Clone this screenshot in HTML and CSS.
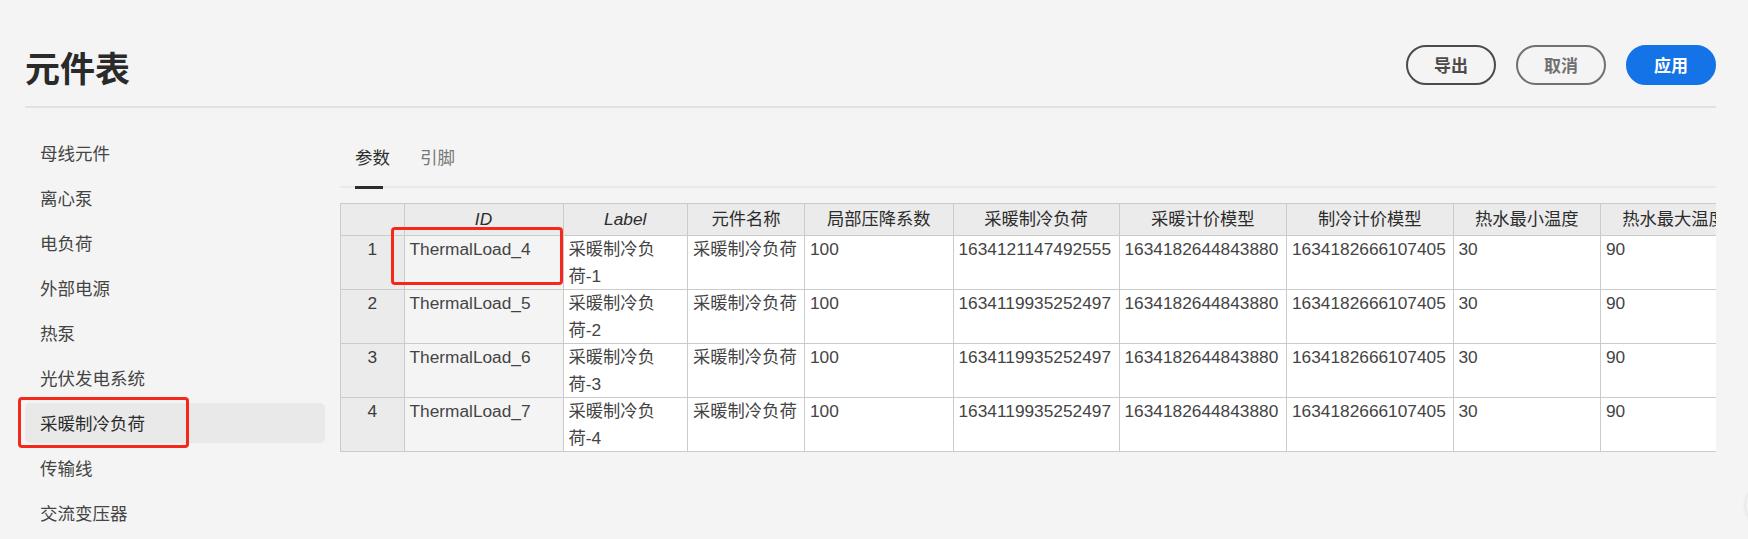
FILE: index.html
```html
<!DOCTYPE html>
<html lang="zh-CN">
<head>
<meta charset="utf-8">
<title>元件表</title>
<link rel="stylesheet" href="styles.css">
</head>
<body>
<div class="page">
  <header class="header">
    <h1 class="title">元件表</h1>
    <div class="actions">
      <button class="btn btn-export">导出</button>
      <button class="btn btn-cancel">取消</button>
      <button class="btn btn-apply">应用</button>
    </div>
  </header>
  <div class="content">
    <nav class="sidebar">
      <div class="nav-item">母线元件</div>
      <div class="nav-item">离心泵</div>
      <div class="nav-item">电负荷</div>
      <div class="nav-item">外部电源</div>
      <div class="nav-item">热泵</div>
      <div class="nav-item">光伏发电系统</div>
      <div class="nav-item active">采暖制冷负荷<span class="mark mark-nav"></span></div>
      <div class="nav-item">传输线</div>
      <div class="nav-item">交流变压器</div>
    </nav>
    <main class="main">
      <div class="tabs">
        <div class="tab active">参数</div>
        <div class="tab">引脚</div>
      </div>
      <div class="table-wrap">
        <table class="grid">
          <colgroup>
            <col class="c-num">
            <col class="c-id">
            <col class="c-label">
            <col class="c-name">
            <col class="c-drop">
            <col class="c-load">
            <col class="c-heat">
            <col class="c-cool">
            <col class="c-min">
            <col class="c-max">
          </colgroup>
          <thead>
            <tr>
              <th></th>
              <th class="it">ID</th>
              <th class="it">Label</th>
              <th>元件名称</th>
              <th>局部压降系数</th>
              <th>采暖制冷负荷</th>
              <th>采暖计价模型</th>
              <th>制冷计价模型</th>
              <th>热水最小温度</th>
              <th>热水最大温度</th>
            </tr>
          </thead>
          <tbody>
            <tr>
              <td class="num">1</td><td class="id">ThermalLoad_4</td><td>采暖制冷负荷-1</td><td>采暖制冷负荷</td><td>100</td><td>1634121147492555</td><td>1634182644843880</td><td>1634182666107405</td><td>30</td><td>90</td>
            </tr>
            <tr>
              <td class="num">2</td><td class="id">ThermalLoad_5</td><td>采暖制冷负荷-2</td><td>采暖制冷负荷</td><td>100</td><td>1634119935252497</td><td>1634182644843880</td><td>1634182666107405</td><td>30</td><td>90</td>
            </tr>
            <tr>
              <td class="num">3</td><td class="id">ThermalLoad_6</td><td>采暖制冷负荷-3</td><td>采暖制冷负荷</td><td>100</td><td>1634119935252497</td><td>1634182644843880</td><td>1634182666107405</td><td>30</td><td>90</td>
            </tr>
            <tr>
              <td class="num">4</td><td class="id">ThermalLoad_7</td><td>采暖制冷负荷-4</td><td>采暖制冷负荷</td><td>100</td><td>1634119935252497</td><td>1634182644843880</td><td>1634182666107405</td><td>30</td><td>90</td>
            </tr>
          </tbody>
        </table>
        <span class="mark mark-cell"></span>
      </div>
    </main>
  </div>
</div>
<div class="float-btn"></div>
</body>
</html>
```

FILE: styles.css
```css
html, body {
  margin: 0;
  padding: 0;
  overflow: hidden;
}
body {
  background: #f4f4f4;
  font-family: "Liberation Sans", "Noto Sans CJK SC", sans-serif;
  color: #444444;
}
.page {
  padding: 45px 32px 0 25px;
}
.header {
  display: flex;
  justify-content: space-between;
  align-items: flex-start;
  height: 61px;
  border-bottom: 2px solid #e1e1e1;
}
.title {
  margin: 2px 0 0 0;
  font-size: 35px;
  line-height: 40px;
  font-weight: 700;
  color: #2a2a2a;
  font-family: "Noto Sans CJK SC", sans-serif;
}
.actions {
  display: flex;
  gap: 20px;
}
.btn {
  width: 90px;
  height: 40px;
  box-sizing: border-box;
  border-radius: 20px;
  border: 2px solid #4b4b4b;
  background: transparent;
  font-family: "Noto Sans CJK SC", sans-serif;
  font-size: 17px;
  font-weight: 700;
  line-height: 36px;
  padding: 0;
  color: #4b4b4b;
}
.btn-cancel {
  border-color: #707070;
  color: #707070;
}
.btn-apply {
  border-color: #1473e6;
  background: #1473e6;
  color: #ffffff;
}
.content {
  display: flex;
  gap: 15px;
  padding-top: 25px;
}
.sidebar {
  width: 300px;
  flex: none;
  display: flex;
  flex-direction: column;
  gap: 5px;
}
.nav-item {
  position: relative;
  height: 40px;
  line-height: 40px;
  padding-left: 15px;
  font-size: 17.5px;
  color: #444444;
  border-radius: 5px;
  font-family: "Noto Sans CJK SC", sans-serif;
}
.nav-item.active {
  background: #e9e9e9;
  color: #2c2c2c;
}
.mark {
  position: absolute;
  box-sizing: border-box;
  border: 3px solid #f5281c;
  border-radius: 4px;
  pointer-events: none;
}
.mark-nav {
  left: -7px;
  top: -6px;
  width: 171px;
  height: 51px;
}
.main {
  flex: 1;
  min-width: 0;
}
.tabs {
  display: flex;
  gap: 30px;
  height: 53px;
  padding-left: 15px;
  border-bottom: 2px solid #e9e9e9;
}
.tab {
  position: relative;
  padding-top: 11px;
  line-height: 25px;
  font-size: 17.5px;
  color: #777777;
  font-family: "Noto Sans CJK SC", sans-serif;
}
.tab.active {
  color: #2c2c2c;
}
.tab.active::after {
  content: "";
  position: absolute;
  left: 0;
  bottom: -3px;
  width: 28px;
  height: 3px;
  background: #2c2c2c;
}
.table-wrap {
  position: relative;
  margin-top: 15px;
  overflow: hidden;
}
.grid {
  border-collapse: collapse;
  table-layout: fixed;
  width: 1407px;
  font-size: 17.3px;
}
.c-num { width: 63.5px; }
.c-id { width: 159px; }
.c-label { width: 124.5px; }
.c-name { width: 117px; }
.c-drop { width: 148.5px; }
.c-load { width: 166px; }
.c-heat { width: 167.5px; }
.c-cool { width: 166.5px; }
.c-min { width: 147.5px; }
.c-max { width: 147px; }
.grid th, .grid td {
  border: 1px solid #cbcbcb;
  padding: 0 5px;
  overflow: hidden;
  white-space: normal;
}
.grid th {
  background: #ebebeb;
  height: 31px;
  line-height: 31px;
  font-weight: 400;
  color: #2c2c2c;
  text-align: center;
  white-space: nowrap;
}
.grid th.it {
  font-style: italic;
}
.grid td {
  background: #ffffff;
  line-height: 26.5px;
  vertical-align: top;
  color: #444444;
  text-align: left;
}
.grid td.num {
  background: #ebebeb;
  text-align: center;
  color: #3c3c3c;
}
.grid td.id {
  background: #f4f4f4;
}
.mark-cell {
  left: 51px;
  top: 24px;
  width: 172px;
  height: 58px;
}
.float-btn {
  position: fixed;
  right: -40px;
  top: 484px;
  width: 42px;
  height: 42px;
  border-radius: 50%;
  background: #f4f4f4;
  box-shadow: 0 0 4px rgba(0, 0, 0, 0.12);
}
```
